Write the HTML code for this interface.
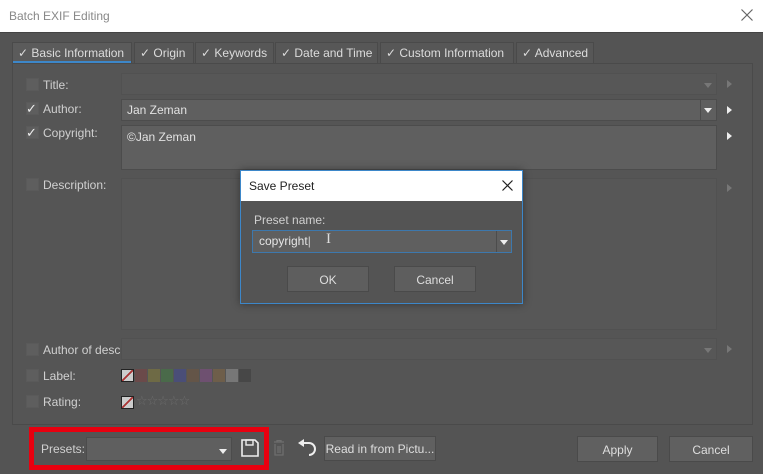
<!DOCTYPE html>
<html><head><meta charset="utf-8"><style>
*{box-sizing:border-box;margin:0;padding:0}
body{width:763px;height:474px;background:#545454;font-family:"Liberation Sans",sans-serif;font-size:12px;color:#d6d6d6;position:relative;overflow:hidden}
.a{position:absolute}
.cb{position:absolute;width:13px;height:13px;background:#5e5e5e;border:1px solid #5a5a5a}
.ck{position:absolute;font-size:13px;color:#eee;line-height:13px}
.lbl{position:absolute;font-size:12px;color:#d0d0d0;white-space:nowrap}
.fld{position:absolute;background:#5f5f5f;border:1px solid #4c4c4c}
.dis{background:#575757;border:1px solid #515151}
.tab{position:absolute;top:42px;height:21px;border:1px solid #4a4a4a;border-bottom:none;background:#575757;font-size:12px;color:#dcdcdc;padding:3px 6px 0 5px;white-space:nowrap}
.btn{position:absolute;background:#606060;border:1px solid #4a4a4a;color:#dedede;text-align:center;font-size:12px;white-space:nowrap}
.arr{position:absolute;width:0;height:0;border-left:4px solid transparent;border-right:4px solid transparent;border-top:5px solid #eee}
.ra{position:absolute;width:0;height:0;border-top:4px solid transparent;border-bottom:4px solid transparent;border-left:5px solid #eee}
</style></head><body>
<div class="a" style="left:0;top:0;width:763px;height:32px;background:#fff;color:#888;font-size:12px;padding:9px 0 0 9px">Batch EXIF Editing</div>
<svg class="a" style="left:741px;top:9px" width="12" height="12"><path d="M0.5 0.5L11.5 11.5M11.5 0.5L0.5 11.5" stroke="#666" stroke-width="1.2"/></svg>
<div class="a" style="left:0;top:32px;width:763px;height:1px;background:#444"></div>

<div class="tab" style="left:12px;width:120px;background:#5b5b5b">✓ Basic Information</div>
<div class="a" style="left:13px;top:61px;width:118px;height:2px;background:#3d87c9"></div>
<div class="tab" style="left:134px;width:60px">✓ Origin</div>
<div class="tab" style="left:195px;width:79px">✓ Keywords</div>
<div class="tab" style="left:275px;width:103px">✓ Date and Time</div>
<div class="tab" style="left:380px;width:134px">✓ Custom Information</div>
<div class="tab" style="left:516px;width:78px">✓ Advanced</div>
<div class="a" style="left:12px;top:63px;width:741px;height:362px;border:1px solid #4a4a4a;background:#555"></div>

<div class="cb" style="left:26px;top:78px"></div><div class="lbl" style="left:43px;top:78px">Title:</div>
<div class="fld dis" style="left:121px;top:73px;width:596px;height:22px"></div>
<div class="arr" style="left:704px;top:83px;border-top-color:#777"></div><div class="ra" style="left:727px;top:80px;border-left-color:#777"></div>

<div class="cb" style="left:26px;top:102px"></div><div class="ck" style="left:26px;top:102px">✓</div><div class="lbl" style="left:43px;top:102px">Author:</div>
<div class="fld" style="left:121px;top:99px;width:596px;height:22px;padding:3px 5px;color:#e2e2e2">Jan Zeman</div>
<div class="a" style="left:700px;top:100px;width:1px;height:20px;background:#4c4c4c"></div>
<div class="arr" style="left:704px;top:108px"></div><div class="ra" style="left:727px;top:106px"></div>

<div class="cb" style="left:26px;top:126px"></div><div class="ck" style="left:26px;top:126px">✓</div><div class="lbl" style="left:43px;top:126px">Copyright:</div>
<div class="fld" style="left:121px;top:125px;width:596px;height:45px;padding:4px 5px;color:#e2e2e2">©Jan Zeman</div>
<div class="ra" style="left:727px;top:132px"></div>

<div class="cb" style="left:26px;top:178px"></div><div class="lbl" style="left:43px;top:178px">Description:</div>
<div class="fld dis" style="left:121px;top:178px;width:596px;height:152px"></div>
<div class="ra" style="left:727px;top:184px;border-left-color:#777"></div>

<div class="cb" style="left:26px;top:343px"></div><div class="lbl" style="left:43px;top:343px">Author of desc</div>
<div class="fld dis" style="left:121px;top:338px;width:596px;height:22px"></div>
<div class="arr" style="left:704px;top:348px;border-top-color:#777"></div><div class="ra" style="left:727px;top:345px;border-left-color:#777"></div>

<div class="cb" style="left:26px;top:369px"></div><div class="lbl" style="left:43px;top:369px">Label:</div>
<div class="a" style="left:121px;top:369px;width:13px;height:13px;border:1px solid #222;background:linear-gradient(135deg,#ccc 44%,#a33 45%,#a33 55%,#ccc 56%)"></div>
<div class="a" style="left:135px;top:369px;display:flex;gap:1px">
<div style="width:12px;height:13px;background:#6b4a4a"></div><div style="width:12px;height:13px;background:#6e6a45"></div><div style="width:12px;height:13px;background:#4a6a4a"></div><div style="width:12px;height:13px;background:#4a4e78"></div><div style="width:12px;height:13px;background:#645548"></div><div style="width:12px;height:13px;background:#6e5070"></div><div style="width:12px;height:13px;background:#6e5e4a"></div><div style="width:12px;height:13px;background:#777"></div><div style="width:12px;height:13px;background:#474747"></div></div>

<div class="cb" style="left:26px;top:395px"></div><div class="lbl" style="left:43px;top:395px">Rating:</div>
<div class="a" style="left:121px;top:396px;width:13px;height:13px;border:1px solid #222;background:linear-gradient(135deg,#ccc 44%,#a33 45%,#a33 55%,#ccc 56%)"></div>
<div class="a" style="left:136px;top:394px;color:#6c6c6c;font-size:13px;font-family:'DejaVu Sans',sans-serif;letter-spacing:-1px">☆☆☆☆☆</div>

<div class="a" style="left:29px;top:427px;width:240px;height:43px;border:5px solid #e8000f"></div>
<div class="lbl" style="left:41px;top:442px">Presets:</div>
<div class="fld" style="left:86px;top:437px;width:146px;height:24px"></div>
<div class="arr" style="left:219px;top:449px"></div>
<svg class="a" style="left:241px;top:439px" width="18" height="18"><path d="M1 1H14L17 4V17H1Z" fill="none" stroke="#eee" stroke-width="1.6"/><rect x="5" y="1" width="7" height="5" fill="none" stroke="#eee" stroke-width="1.4"/></svg>
<svg class="a" style="left:273px;top:440px" width="12" height="16"><path d="M1 2H11M4 2V0.5H8V2M2 4V15H10V4M5 6V13M7 6V13" fill="none" stroke="#6e6e6e" stroke-width="1.3"/></svg>
<svg class="a" style="left:298px;top:439px" width="20" height="18"><path d="M4 4H11A6 6 0 0 1 11 16" fill="none" stroke="#eee" stroke-width="2"/><path d="M0 4L6 0V8Z" fill="#eee"/></svg>
<div class="btn" style="left:324px;top:436px;width:112px;height:25px;padding-top:5px">Read in from Pictu...</div>
<div class="btn" style="left:577px;top:436px;width:81px;height:26px;padding-top:6px">Apply</div>
<div class="btn" style="left:669px;top:436px;width:84px;height:26px;padding-top:6px">Cancel</div>

<div class="a" style="left:240px;top:170px;width:283px;height:134px;border:1px solid #3d87c9;background:#545454;box-shadow:0 0 8px rgba(0,0,0,.4)"></div>
<div class="a" style="left:241px;top:171px;width:281px;height:30px;background:#fff;color:#222;font-size:12px;padding:8px 0 0 8px">Save Preset</div>
<svg class="a" style="left:502px;top:180px" width="11" height="11"><path d="M0.5 0.5L10.5 10.5M10.5 0.5L0.5 10.5" stroke="#222" stroke-width="1.2"/></svg>
<div class="lbl" style="left:254px;top:213px">Preset name:</div>
<div class="fld" style="left:252px;top:230px;width:260px;height:23px;border-color:#3d78ad;padding:3px 6px;color:#e6e6e6">copyright<span style="color:#ccc">|</span></div>
<div class="a" style="left:496px;top:231px;width:1px;height:21px;background:#4c4c4c"></div>
<div class="arr" style="left:500px;top:240px"></div>
<div class="a" style="left:326px;top:231px;font-size:15px;color:#ddd;font-family:'Liberation Serif',serif">I</div>
<div class="btn" style="left:287px;top:266px;width:82px;height:26px;padding-top:6px;background:#5e5e5e">OK</div>
<div class="btn" style="left:394px;top:266px;width:82px;height:26px;padding-top:6px;background:#5e5e5e">Cancel</div>
</body></html>
